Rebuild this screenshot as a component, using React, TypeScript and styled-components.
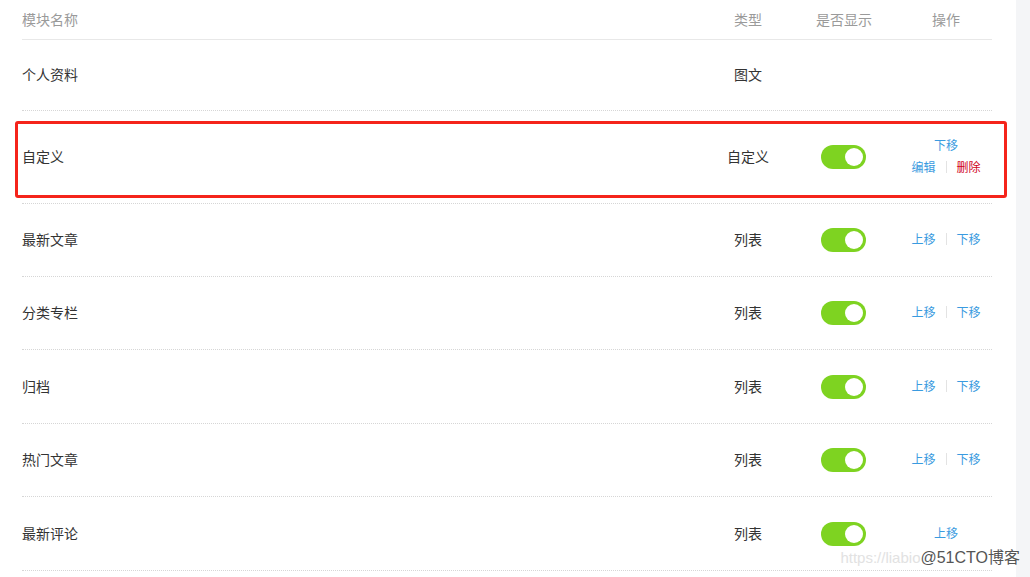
import React from "react";
import styled, { createGlobalStyle } from "styled-components";

const Global = createGlobalStyle`
  html, body { margin: 0; padding: 0; background: #fff; }
  body { font-family: "Noto Sans CJK SC", "Noto Sans", sans-serif; }
`;

const Page = styled.div`
  display: flex;
  width: 1030px;
  height: 577px;
  overflow: hidden;
  position: relative;
`;

const Main = styled.div`
  flex: 1;
  padding: 0 24px 0 22px;
`;

const Gutter = styled.div`
  width: 14px;
  background: #f4f5f7;
`;

const Grid = styled.div`
  display: grid;
  grid-template-columns: 1fr 80px 112px 92px;
  align-items: center;
`;

const HeaderRow = styled(Grid)`
  height: 39px;
  border-bottom: 1px solid #e8e8e8;
  color: #9a9a9a;
  font-size: 14px;
`;

const Row = styled(Grid)<{ $h: number }>`
  position: relative;
  height: ${(p) => p.$h}px;
  border-bottom: 1px dotted #d6d6d6;
  color: #333;
  font-size: 14px;
`;

const Cell = styled.div<{ $center?: boolean }>`
  display: flex;
  flex-direction: column;
  align-items: ${(p) => (p.$center ? "center" : "flex-start")};
  justify-content: center;
  line-height: 20px;
  padding-bottom: 2px;
`;

const ToggleCell = styled.div`
  display: flex;
  justify-content: center;
  align-items: center;
`;

const Highlight = styled.div`
  position: absolute;
  left: -7px;
  right: -15px;
  top: 10px;
  bottom: 5px;
  border: 3px solid #f5241b;
  border-radius: 3px;
  pointer-events: none;
`;

const Toggle = styled.div`
  width: 45px;
  height: 24px;
  border-radius: 12px;
  background: #7ed321;
  display: flex;
  align-items: center;
  justify-content: flex-end;
  padding-right: 3px;
  margin-right: 2px;
  box-sizing: border-box;
`;

const Knob = styled.div`
  width: 18px;
  height: 18px;
  border-radius: 50%;
  background: #fff;
`;

const Actions = styled.div`
  display: flex;
  align-items: center;
  justify-content: center;
  font-size: 12px;
  line-height: 22px;
`;

const Link = styled.span<{ $danger?: boolean }>`
  color: ${(p) => (p.$danger ? "#d0021b" : "#3a9be0")};
  cursor: pointer;
`;

const Divider = styled.span`
  width: 1px;
  height: 12px;
  background: #e3e3e3;
  margin: 0 10px;
`;

const Watermark = styled.div`
  position: absolute;
  right: 10px;
  bottom: 9px;
  font-family: "Liberation Sans", "Noto Sans CJK SC", sans-serif;
  font-size: 16px;
  display: flex;
  align-items: baseline;
`;

const WmUrl = styled.span`
  color: #e2e2e2;
  font-size: 15px;
`;

const WmBrand = styled.span`
  color: #555;
  text-shadow: 0 0 2px #fff, 0 0 2px #fff;
`;

type R = { name: string; type: string; up: boolean; down: boolean; h: number };

const rows: R[] = [
  { name: "最新文章", type: "列表", up: true, down: true, h: 72 },
  { name: "分类专栏", type: "列表", up: true, down: true, h: 72 },
  { name: "归档", type: "列表", up: true, down: true, h: 73 },
  { name: "热门文章", type: "列表", up: true, down: true, h: 72 },
  { name: "最新评论", type: "列表", up: true, down: false, h: 73 },
];

export default function App() {
  return (
    <>
      <Global />
      <Page>
        <Main>
          <HeaderRow>
            <Cell>模块名称</Cell>
            <Cell $center>类型</Cell>
            <Cell $center>是否显示</Cell>
            <Cell $center>操作</Cell>
          </HeaderRow>
          <Row $h={70}>
            <Cell>个人资料</Cell>
            <Cell $center>图文</Cell>
            <ToggleCell />
            <Cell $center />
          </Row>
          <Row $h={92}>
            <Cell>自定义</Cell>
            <Cell $center>自定义</Cell>
            <ToggleCell>
              <Toggle><Knob /></Toggle>
            </ToggleCell>
            <Cell $center>
              <Actions><Link>下移</Link></Actions>
              <Actions>
                <Link>编辑</Link>
                <Divider />
                <Link $danger>删除</Link>
              </Actions>
            </Cell>
            <Highlight />
          </Row>
          {rows.map((r) => (
            <Row key={r.name} $h={r.h}>
              <Cell>{r.name}</Cell>
              <Cell $center>{r.type}</Cell>
              <ToggleCell>
                <Toggle><Knob /></Toggle>
              </ToggleCell>
              <Cell $center>
                <Actions>
                  {r.up && <Link>上移</Link>}
                  {r.up && r.down && <Divider />}
                  {r.down && <Link>下移</Link>}
                </Actions>
              </Cell>
            </Row>
          ))}
        </Main>
        <Gutter />
        <Watermark>
          <WmUrl>https://liabio</WmUrl>
          <WmBrand>@51CTO博客</WmBrand>
        </Watermark>
      </Page>
    </>
  );
}
